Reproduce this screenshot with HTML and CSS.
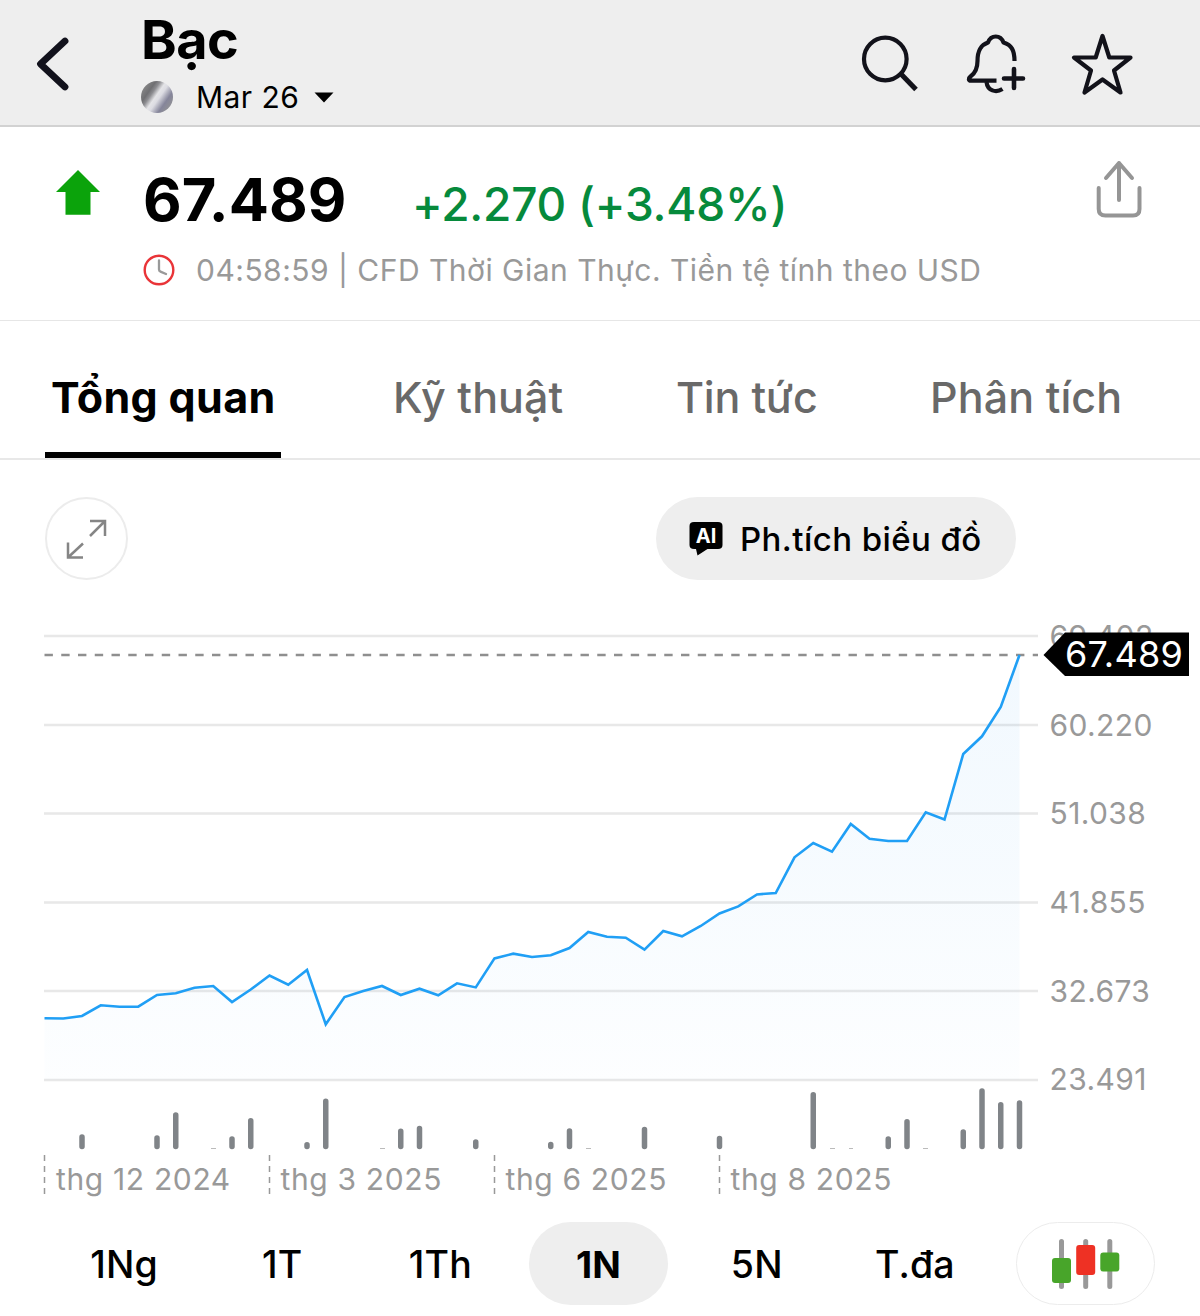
FILE: index.html
```html
<!DOCTYPE html>
<html lang="vi">
<head>
<meta charset="utf-8">
<title>Bạc</title>
<link rel="stylesheet" href="styles.css">
</head>
<body>
<header class="topbar">
  <svg class="back" width="40" height="60" viewBox="32 34 40 60"><path d="M65 41L40.500 64L65 87" fill="none" stroke="#12121c" stroke-width="6.800" stroke-linecap="round" stroke-linejoin="round"/></svg>
  <div class="titles">
    <h1 class="name">Bạc</h1>
    <div class="contract">
      <span class="metal"></span>
      <span class="month">Mar 26</span>
      <svg class="caret" width="20" height="11" viewBox="0 0 20 11"><path d="M.5.500h19L10 10.500z"/></svg>
    </div>
  </div>
  <svg class="actions" width="280" height="70" viewBox="858 30 280 70" fill="none" stroke="#12121a" stroke-width="4.200" stroke-linejoin="round">
    <circle cx="885.300" cy="59" r="21.300"/>
    <path d="M901 74L916 89.500" stroke-width="5"/>
    <path d="M1014.500 61C1014.500 50 1011.500 45 1003.500 42.500C1000.500 34.500 991 34.500 988 42.500C981 45 977.500 50 977.500 61C977.500 69 975.500 73 970.500 76.500C968 78.500 968.500 80.700 971 80.700H996.500"/>
    <path d="M986.500 82C987.500 91 996 93 1002.500 89"/>
    <path d="M1014 69V88M1004 78.500H1023" stroke-width="4.600" stroke-linecap="round"/>
    <path d="M1102.500 36L1109.300 57.500H1130.500L1114 70.500L1120.500 92.500L1102.500 79.500L1084.500 92.500L1091 70.500L1074 57.500H1095.700Z"/>
  </svg>
</header>

<section class="quote">
  <svg class="up" width="44" height="46" viewBox="0 0 44 46"><path d="M22 0L44 22H34.500V44.700H9.500V22H0z" fill="#0ba30b"/></svg>
  <div class="figures">
    <div class="prices"><span class="last">67.489</span><span class="change">+2.270 (+3.48%)</span></div>
    <div class="meta">
      <svg width="32" height="32" viewBox="0 0 32 32" fill="none"><circle cx="16" cy="16" r="14.300" stroke="#e93438" stroke-width="2.400"/><path d="M16 6.500V15.500Q16 17 17.500 17.600L23 20" stroke="#999" stroke-width="2.300" stroke-linecap="round"/></svg>
      <span class="info">04:58:59 | CFD Thời Gian Thực. Tiền tệ tính theo USD</span>
    </div>
  </div>
  <svg class="share" width="50" height="62" viewBox="1094 158 50 62" fill="none" stroke="#959595" stroke-width="4" stroke-linecap="round" stroke-linejoin="round"><path d="M1119 200V163M1106 178L1119 163L1132 178M1098.700 188V209Q1098.700 215.500 1105.500 215.500H1133Q1139.500 215.500 1139.500 209V188"/></svg>
</section>

<nav class="tabs">
  <a class="tab active">Tổng quan</a>
  <a class="tab tech">Kỹ thuật</a>
  <a class="tab news">Tin tức</a>
  <a class="tab analysis">Phân tích</a>
</nav>

<div class="tools">
  <button class="expand"><svg width="42" height="42" viewBox="66 517 42 42" fill="none" stroke="#858585" stroke-width="2.500"><path d="M90 520H105V535M105 520L90 535M68 541.500V556.500H83M68 556.500L83 542.500"/></svg></button>
  <button class="ai">
    <svg width="34" height="36" viewBox="0 0 34 36"><path d="M5 1H29Q33.500 1 33.500 5V24Q33.500 28 29 28H18.500L8.500 34.500L7 28H5Q.5 28 .5 24V5Q.5 1 5 1z"/><text x="17" y="21.500" class="ai-mark" text-anchor="middle">AI</text></svg>
    <span>Ph.tích biểu đồ</span>
  </button>
</div>

<svg class="chart" width="1200" height="600" viewBox="0 605 1200 600">
  <defs><linearGradient id="fill" gradientUnits="userSpaceOnUse" x1="0" y1="655" x2="0" y2="1080"><stop offset="0" stop-color="#2196f3" stop-opacity=".06"/><stop offset=".5" stop-color="#2196f3" stop-opacity=".04"/><stop offset="1" stop-color="#2196f3" stop-opacity=".01"/></linearGradient></defs>
  <path class="grid" d="M44 636H1038M44 725H1038M44 813.500H1038M44 902.500H1038M44 991H1038M44 1080H1038"/>
  <path d="M44.500 1080V1018.300L63.250 1018.500L82 1016L100.750 1005.300L119.500 1006.700H138.250L157 995L175.750 993.300L194.500 987.700L213.250 986L232 1002L250.750 989.500L269.500 975.500L288.250 984.700L307 970L325.750 1024.300L344.500 997L363.250 991L382 986L400.750 995L419.500 988.700L438.250 995.300L457 983.300L475.750 987.400L494.500 958.400L513.250 953.700L532 957L550.750 955.300L569.500 948L588.250 932L607 936.700L625.750 937.700L644.500 949.700L663.250 931L682 936.300L700.750 926L719.500 913.500L738.250 906.400L757 894.400L775.750 893L794.500 857.300L813.250 843L832 851.700L850.750 824L869.500 838.700L888.250 841H907L925.750 812.300L944.500 819.500L963.250 754L982 736.300L1000.750 707L1019.500 654.500V1080z" fill="url(#fill)"/>
  <path class="last-line" d="M44.500 655H1038"/>
  <path class="line" d="M44.500 1018.300L63.250 1018.500L82 1016L100.750 1005.300L119.500 1006.700H138.250L157 995L175.750 993.300L194.500 987.700L213.250 986L232 1002L250.750 989.500L269.500 975.500L288.250 984.700L307 970L325.750 1024.300L344.500 997L363.250 991L382 986L400.750 995L419.500 988.700L438.250 995.300L457 983.300L475.750 987.400L494.500 958.400L513.250 953.700L532 957L550.750 955.300L569.500 948L588.250 932L607 936.700L625.750 937.700L644.500 949.700L663.250 931L682 936.300L700.750 926L719.500 913.500L738.250 906.400L757 894.400L775.750 893L794.500 857.300L813.250 843L832 851.700L850.750 824L869.500 838.700L888.250 841H907L925.750 812.300L944.500 819.500L963.250 754L982 736.300L1000.750 707L1019.500 655"/>
  <path class="volume" d="M82 1137V1146.500M157 1138V1146.500M175.750 1115V1146.500M232 1139V1146.500M250.750 1120.700V1146.500M307 1144.700V1146.500M325.750 1101.300V1146.500M400.750 1131.300V1146.500M419.500 1128.500V1146.500M475.750 1142V1146.500M550.750 1144.500V1146.500M569.500 1131V1146.500M644.500 1129.500V1146.500M719.500 1138.500V1146.500M813.250 1094.800V1146.500M888.250 1139V1146.500M907 1121.700V1146.500M963.250 1132V1146.500M982 1091V1146.500M1000.750 1104.800V1146.500M1019.500 1103V1146.500"/>
  <path d="M211 1148.500h5M380 1148.500h5M586 1148.500h5M830 1148.500h5M849 1148.500h4M923 1148.500h5" stroke="#bbb" stroke-width="1"/>
  <path class="ticks" d="M44.500 1155V1195M269.500 1155V1195M494.500 1155V1195M719.500 1155V1195"/>
  <g class="axis">
    <text x="1049.500" y="646.500">69.402</text><text x="1049.500" y="735.500">60.220</text><text x="1049.500" y="824">51.038</text><text x="1049.500" y="913">41.855</text><text x="1049.500" y="1001.500">32.673</text><text x="1049.500" y="1090">23.491</text>
  </g>
  <g class="axis months">
    <text x="56" y="1189.500">thg 12 2024</text><text x="280.500" y="1189.500">thg 3 2025</text><text x="505.500" y="1189.500">thg 6 2025</text><text x="730.500" y="1189.500">thg 8 2025</text>
  </g>
  <path d="M1043.500 655L1065 632.500H1189V676H1065z"/>
  <text class="tag" x="1065" y="667">67.489</text>
</svg>

<div class="ranges">
  <div class="range-list">
    <button class="range">1Ng</button><button class="range">1T</button><button class="range">1Th</button><button class="range selected">1N</button><button class="range">5N</button><button class="range">T.đa</button>
  </div>
  <button class="style-toggle">
    <svg width="70" height="52" viewBox="1051 1238 70 52"><path d="M1061.500 1241.500V1286.500M1085.700 1241.500V1286.500M1109.800 1241.500V1286.500" stroke="#999" stroke-width="5" stroke-linecap="round"/><rect x="1052" y="1258" width="19" height="25" rx="3" fill="#48a52a"/><rect x="1076.200" y="1245" width="19" height="30" rx="3" fill="#ee3124"/><rect x="1100.300" y="1252.500" width="19" height="19" rx="3" fill="#48a52a"/></svg>
  </button>
</div>
</body>
</html>
```

FILE: styles.css
```css
* { box-sizing: border-box; }
body { margin: 0; width: 1200px; height: 1316px; overflow: hidden; background: #fff; color: #000; font-family: Inter, "Liberation Sans", sans-serif; }
svg { display: block; flex: none; }
button { border: 0; margin: 0; padding: 0; background: none; font: inherit; color: inherit; }

.topbar { display: flex; height: 127px; background: #eee; border-bottom: 2px solid #d2d2d2; }
.back { margin: 34px 0 0 32px; }
.titles { margin-left: 69px; width: 300px; }
.name { margin: 9px 0 0; font-size: 54px; line-height: 62px; font-weight: 700; letter-spacing: -0.6px; }
.contract { display: flex; align-items: center; height: 36px; margin-top: 8px; }
.metal { width: 32px; height: 32px; border-radius: 50%; background: linear-gradient(125deg, #8c8c8c 8%, #6f6f72 28%, #8c8c90 36%, #e4e4e7 47%, #dcdce2 55%, #85859a 72%, #8e8e96 84%, #b0b0b2 95%); }
.month { margin-left: 23px; font-size: 30px; letter-spacing: .45px; }
.caret { margin-left: 15px; }
.actions { margin: 30px 0 0 417px; }

.quote { display: flex; height: 194px; border-bottom: 1px solid #e6e6e6; }
.up { margin: 43px 0 0 56px; }
.figures { margin-left: 43px; width: 900px; }
.prices { display: flex; align-items: baseline; margin-top: 36px; height: 72px; line-height: 72px; white-space: nowrap; }
.last { width: 269px; font-size: 59.500px; font-weight: 700; }
.change { font-size: 46px; font-weight: 500; letter-spacing: -.2px; color: #068a3c; }
.meta { display: flex; align-items: center; height: 40px; margin-top: 15px; }
.info { margin-left: 21px; font-size: 30px; letter-spacing: .48px; color: #999; white-space: nowrap; }
.share { margin: 31px 0 0 51px; }

.tabs { display: flex; height: 139px; padding-left: 45px; border-bottom: 2px solid #e8e8e8; font-size: 43px; line-height: 153px; font-weight: 500; color: #696969; white-space: nowrap; }
.tab { height: 137px; }
.active { width: 236px; padding-left: 6px; border-bottom: 6px solid #000; font-weight: 700; letter-spacing: .35px; color: #000; }
.tech { margin-left: 112px; width: 283px; letter-spacing: .1px; }
.news { width: 254px; letter-spacing: -.2px; }
.analysis { letter-spacing: .1px; }

.tools { display: flex; justify-content: space-between; width: 1016px; height: 145px; padding: 37px 0 0 45px; }
.expand { display: grid; place-items: center; width: 83px; height: 83px; border: 2px solid #ececec; border-radius: 50%; }
.ai { display: flex; align-items: center; width: 360px; height: 83px; padding-left: 33px; gap: 17px; border-radius: 42px; background: #eee; font-size: 33px; letter-spacing: .42px; font-weight: 500; white-space: nowrap; }
.ai-mark { font-size: 20px; font-weight: 700; letter-spacing: 0; fill: #fff; }

.grid { fill: none; stroke: #e8e8e8; stroke-width: 2.500; }
.last-line { fill: none; stroke: #8f8f8f; stroke-width: 2.700; stroke-dasharray: 8.400 8.350; }
.line { fill: none; stroke: #209ff5; stroke-width: 2.600; stroke-linejoin: miter; }
.volume { fill: none; stroke: #808488; stroke-width: 5.500; stroke-linecap: round; }
.ticks { fill: none; stroke: #999; stroke-width: 1.500; stroke-dasharray: 6 5; }
.axis { font-size: 30px; letter-spacing: .4px; fill: #999; }
.months { letter-spacing: .65px; }
.tag { font-size: 36px; letter-spacing: .3px; fill: #fff; }

.ranges { display: flex; height: 83px; margin-top: 17px; padding-left: 45px; }
.range-list { display: grid; grid-template-columns: repeat(6, 1fr); justify-items: center; width: 949px; }
.range { width: 139px; height: 83px; padding-top: 2px; border-radius: 42px; font-size: 37.500px; letter-spacing: .2px; font-weight: 500; }
.selected { background: #eee; font-weight: 700; }
.style-toggle { display: grid; place-items: center; width: 139px; height: 83px; margin-left: 22px; border: 1px solid #ececec; border-radius: 42px; }
```
